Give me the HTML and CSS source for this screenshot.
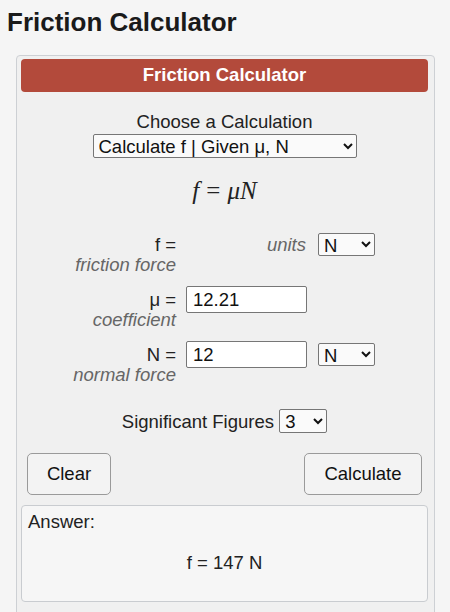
FILE: index.html
```html
<!DOCTYPE html>
<html lang="en">
<head>
  <meta charset="UTF-8">
  <meta name="viewport" content="width=device-width, initial-scale=1.0">
  <title>Friction Calculator</title>
  <link rel="stylesheet" href="styles.css">
</head>
<body>
  <h1>Friction Calculator</h1>

  <div class="panel">
    <div class="panel-head">Friction Calculator</div>

    <div class="choose">
      <div>Choose a Calculation</div>
      <select class="calc-select">
        <option>Calculate f | Given &mu;, N</option>
      </select>
    </div>

    <div class="formula"><i>f</i><span class="eq">=</span><i>&mu;N</i></div>

    <div class="fields">
      <div class="label">f =<em>friction force</em></div>
      <div class="units">units</div>
      <select class="unit-select"><option>N</option></select>

      <div class="label">&mu; =<em>coefficient</em></div>
      <input type="text" value="12.21">
      <div></div>

      <div class="label">N =<em>normal force</em></div>
      <input type="text" value="12">
      <select class="unit-select"><option>N</option></select>
    </div>

    <div class="sigfigs">
      Significant Figures
      <select class="sig-select"><option>3</option></select>
    </div>

    <div class="buttons">
      <button class="btn-clear">Clear</button>
      <button class="btn-calc">Calculate</button>
    </div>

    <div class="answer">
      <div>Answer:</div>
      <div class="answer-value">f = 147 N</div>
    </div>
  </div>
</body>
</html>
```

FILE: styles.css
```css
body {
  font-family: "Liberation Sans", Arial, sans-serif;
  background-color: #f5f5f5;
  color: #222;
  margin: 0;
}
h1 {
  font-size: 26px;
  margin: 6px 7px 0;
  line-height: 32px;
  color: #1a1a1a;
}
.panel {
  margin: 17px 15px 0 16px;
  padding: 3px 6px 20px 4px;
  border: 1px solid #cdd0d4;
  border-radius: 4px;
  background-color: #f0f0f0;
  font-size: 18.5px;
}
.panel-head {
  background-color: #b34a3b;
  color: white;
  font-weight: bold;
  font-size: 18.5px;
  text-align: center;
  height: 33px;
  line-height: 32px;
  border-radius: 4px;
}
.choose {
  margin-top: 19px;
  text-align: center;
  line-height: 22px;
}
select, input, button {
  font-family: "Liberation Sans", Arial, sans-serif;
  font-size: 18.5px;
  color: #111;
}
select {
  background-color: #fafafa;
  border: 1px solid #767676;
  border-radius: 2px;
  padding: 0 0 0 1px;
  height: 24px;
}
.calc-select {
  width: 264px;
  margin-top: 1px;
}
.formula {
  font-family: "Liberation Serif", "Times New Roman", serif;
  font-size: 25px;
  text-align: center;
  margin-top: 19px;
  line-height: 28px;
}
.formula .eq {
  margin: 0 7px;
}
.fields {
  display: grid;
  grid-template-columns: 155px 121px 57px;
  column-gap: 10px;
  row-gap: 14px;
  margin-top: 26px;
}
.label {
  text-align: right;
  line-height: 27px;
}
.label em {
  display: block;
  color: #666;
  line-height: 14px;
}
.units {
  text-align: right;
  font-style: italic;
  color: #666;
  line-height: 27px;
  padding-right: 1px;
}
.unit-select {
  width: 57px;
  height: 23px;
  margin: 2px 0 0 1px;
}
input {
  height: 27px;
  box-sizing: border-box;
  border: 1px solid #767676;
  border-radius: 2px;
  background-color: white;
  padding: 0 6px;
}
.sigfigs {
  text-align: center;
  margin-top: 27px;
}
.sig-select {
  width: 48px;
}
.buttons {
  display: flex;
  justify-content: space-between;
  margin: 20px 6px 0 6px;
}
button {
  height: 42px;
  background-color: #f3f3f3;
  border: 1px solid #9a9a9a;
  border-radius: 5px;
}
.btn-clear {
  width: 84px;
}
.btn-calc {
  width: 118px;
}
.answer {
  margin-top: 10px;
  height: 97px;
  box-sizing: border-box;
  border: 1px solid #c9ccd0;
  border-radius: 4px;
  background-color: #f6f6f6;
  padding: 5px 6px;
  line-height: 22px;
}
.answer-value {
  text-align: center;
  margin-top: 19px;
}
```
